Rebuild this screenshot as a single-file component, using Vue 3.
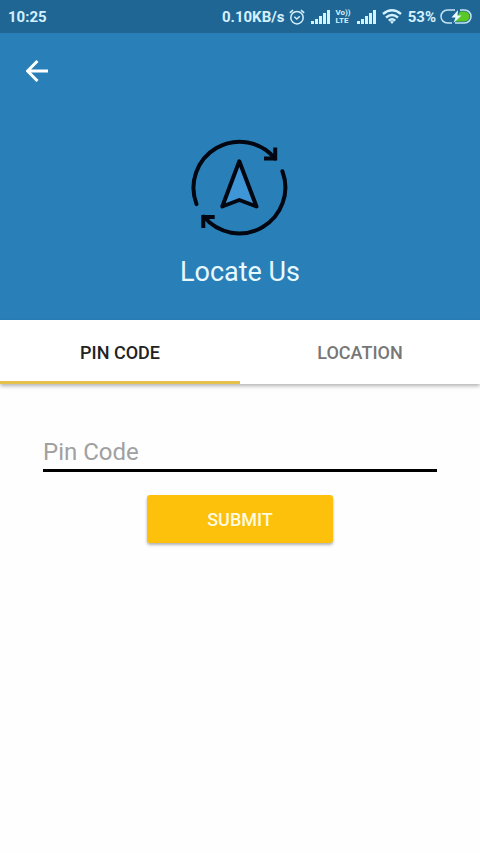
<script setup>
import { ref } from 'vue'

const tabs = ['PIN CODE', 'LOCATION']
const active = ref(0)
const pin = ref('')
</script>

<template>
  <main class="screen">
    <header class="hero">
      <div class="status">
        <span class="clock">10:25</span>
        <div class="indicators">
          <span class="speed">0.10KB/s</span>
          <svg class="alarm" width="16" height="16" viewBox="0 0 16 16" stroke-width="1.5" aria-hidden="true">
            <circle cx="8" cy="8.7" r="6.2" />
            <path d="M5.3 7.8 7.8 10l3-2.8M.8 3.8 4 1.2M15.2 3.8 12 1.2" />
          </svg>
          <svg class="signal" width="19" height="14" viewBox="0 0 19 14" aria-hidden="true">
            <path d="M0 11h3v3H0zM4 9h3v5H4zM8 6h3v8H8zM12 3h3v11h-3zM16 0h3v14h-3z" />
          </svg>
          <span class="volte">Vo))<br />LTE</span>
          <svg class="signal" width="19" height="14" viewBox="0 0 19 14" aria-hidden="true">
            <path d="M0 11h3v3H0zM4 9h3v5H4zM8 6h3v8H8zM12 3h3v11h-3zM16 0h3v14h-3z" />
          </svg>
          <svg class="wifi" width="20" height="15" viewBox="0 0 20 15" stroke-width="2.4" aria-hidden="true">
            <path d="M1 5Q10-2.400 19 5M4 8.500Q10 3.400 16 8.500M6.800 11.700Q10 9 13.200 11.700" />
            <path class="dot" d="M8 12.600Q10 11.400 12 12.600L10 15z" />
          </svg>
          <span class="percent">53%</span>
          <svg class="battery" width="32" height="15" viewBox="0 0 32 15" aria-hidden="true">
            <path class="charge" d="M20 2.500h4.500a5 5 0 0 1 0 10H15z" />
            <path class="shell" stroke-width="1.5" d="M15 1H7.500a6.500 6.500 0 0 0 0 13H12M20 1h4.500a6.500 6.500 0 0 1 0 13H15" />
            <path class="bolt" d="M18 1 11.500 8.500h4L13.500 14 21.500 6.500h-4z" />
          </svg>
        </div>
      </div>
      <button class="back" type="button" aria-label="Back">
        <svg width="22" height="22" viewBox="0 0 22 22" aria-hidden="true">
          <path d="M22 11H2M11.500 1 1.500 11l10 10" />
        </svg>
      </button>
      <div class="intro">
        <svg class="locate" width="100" height="100" viewBox="0 0 100 100" aria-hidden="true">
          <path d="M6.500 66.100A46 46 0 0 1 85 20.500M92.400 33.200A46 46 0 0 1 13.800 78.600" />
          <path d="M85.200 9.500v11H74M13.300 90V79h11.400" class="tips" />
          <path class="needle" d="M49.300 23.300 66.500 68.500 49.300 62 32.300 68.500z" />
        </svg>
        <h1>Locate Us</h1>
      </div>
    </header>

    <nav class="tabs" role="tablist">
      <button
        v-for="(tab, i) in tabs"
        :key="tab"
        type="button"
        role="tab"
        :aria-selected="active === i"
        :class="{ active: active === i }"
        @click="active = i"
      >{{ tab }}</button>
    </nav>

    <form class="form" @submit.prevent>
      <input v-model="pin" type="text" inputmode="numeric" placeholder="Pin Code" aria-label="Pin Code" />
      <button type="submit">SUBMIT</button>
    </form>
  </main>
</template>

<style>
body {
  background: #fefefe;
}
</style>

<style scoped>
.screen {
  font-family: Roboto, "Liberation Sans", sans-serif;
}
svg {
  display: block;
  flex: none;
}
button,
input {
  box-sizing: border-box;
  font-family: inherit;
  border: 0;
  padding: 0;
  margin: 0;
  outline: 0;
}
.hero {
  background: #2980b9;
  padding-bottom: 31px;
}
.status {
  display: flex;
  align-items: center;
  justify-content: space-between;
  height: 33px;
  padding: 0 8px;
  background: #206694;
  color: #d4f1ff;
  font-size: 15px;
  line-height: 20px;
  font-weight: 700;
}
.indicators {
  display: flex;
  align-items: center;
  gap: 6px;
}
.speed {
  margin-right: -2px;
}
.percent {
  margin-right: -2px;
}
.alarm,
.wifi {
  fill: none;
  stroke: #d4f1ff;
}
.signal {
  fill: #d4f1ff;
}
.wifi .dot {
  fill: #d4f1ff;
  stroke: none;
}
.volte {
  font-size: 8px;
  line-height: 8px;
}
.shell {
  fill: none;
  stroke: #c4e4f5;
}
.charge {
  fill: #5ac926;
}
.bolt {
  fill: #e8faff;
}
.back {
  display: flex;
  align-items: center;
  justify-content: center;
  width: 48px;
  height: 48px;
  margin: 14px 0 0 13px;
  background: none;
  cursor: pointer;
}
.back svg {
  fill: none;
  stroke: #fff;
  stroke-width: 3;
}
.intro {
  display: flex;
  flex-direction: column;
  align-items: center;
  padding-top: 43px;
}
.locate {
  fill: none;
  stroke: #020611;
  stroke-width: 4;
  stroke-linecap: round;
  stroke-linejoin: round;
}
.locate .tips {
  stroke-linecap: butt;
  stroke-linejoin: miter;
}
.locate .needle {
  fill: #3f96d6;
}
h1 {
  margin: 18px 0 0;
  color: #e9faff;
  font-size: 27px;
  line-height: 33px;
  font-weight: 400;
}
.tabs {
  display: grid;
  grid-template-columns: 1fr 1fr;
  height: 64px;
  background: #fff;
  box-shadow: 0 2px 4px rgba(0, 0, 0, 0.3);
}
.tabs button {
  padding-top: 3px;
  border-bottom: 3px solid transparent;
  background: none;
  color: #777;
  font-size: 18px;
  font-weight: 500;
  cursor: pointer;
}
.tabs button.active {
  color: #222;
  border-bottom-color: #e5c04a;
}
.form {
  display: flex;
  flex-direction: column;
  align-items: center;
  gap: 23px;
  padding: 48px 43px;
}
.form input {
  width: 100%;
  height: 40px;
  padding-top: 3px;
  border-bottom: 3px solid #000;
  border-radius: 0;
  background: none;
  color: #222;
  font-size: 24px;
}
.form input::placeholder {
  color: #a0a0a0;
  opacity: 1;
}
.form button {
  width: 186px;
  height: 48px;
  border-radius: 3px;
  background: #fdc00b;
  color: #fffbe0;
  font-size: 18px;
  font-weight: 500;
  box-shadow: 0 2px 3px rgba(0, 0, 0, 0.3);
  cursor: pointer;
}
</style>
